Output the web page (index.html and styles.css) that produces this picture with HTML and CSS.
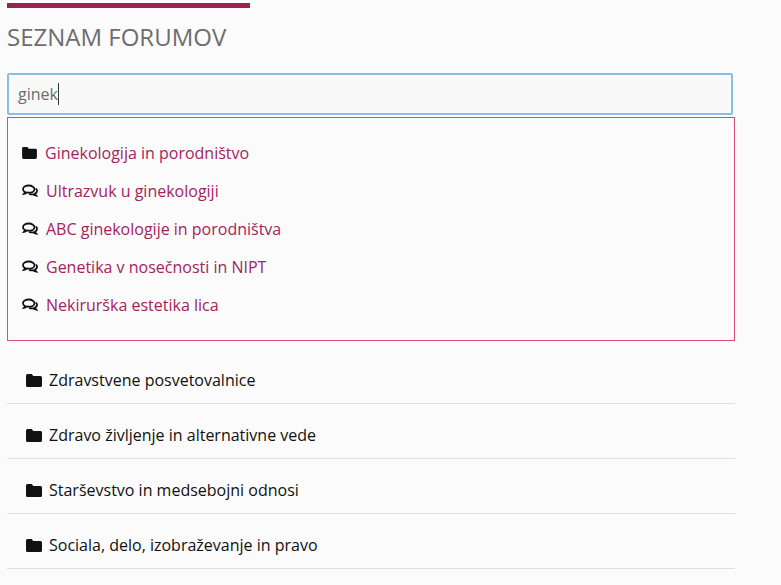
FILE: index.html
```html
<!DOCTYPE html>
<html lang="en">
<head>
    <meta charset="UTF-8">
    <meta name="viewport" content="width=device-width, initial-scale=1.0">
    <title>Seznam forumov</title>
    <link rel="stylesheet" href="styles.css">
</head>
<body>
    <svg class="sprite" width="0" height="0">
        <symbol id="folder" viewBox="0 0 16 13">
            <path d="M1.500 0h4.200l1.600 2h7.200a1.500 1.500 0 0 1 1.500 1.500v8a1.500 1.500 0 0 1-1.500 1.500h-13a1.500 1.500 0 0 1-1.500-1.500v-10a1.500 1.500 0 0 1 1.500-1.500z"/>
        </symbol>
        <symbol id="comments" viewBox="0 0 16 14">
            <path class="bubble" d="M6.800 1.500C3.600 1.500 1 3.100 1 5.200c0 1.200.8 2.200 2 2.900-.2.7-.6 1.200-1 1.700 1.100-.2 2-.7 2.800-1.300.6.1 1.300.2 2 .2 3.200 0 5.700-1.600 5.700-3.500S10 1.500 6.800 1.500z"/>
            <path class="bubble" d="M13.700 4.400c.9.600 1.400 1.400 1.400 2.400 0 1.200-.8 2.200-2 2.800.2.800.6 1.500 1.200 2.100-1.300-.2-2.400-.8-3.200-1.400-1.400.2-2.800 0-4-.5"/>
        </symbol>
    </svg>

    <div class="page">
        <div class="top-bar"></div>
        <h1 class="title">SEZNAM FORUMOV</h1>

        <div class="search-box">ginek<span class="caret"></span></div>

        <ul class="results">
            <li><svg class="icon-folder"><use href="#folder"/></svg><a href="#">Ginekologija in porodništvo</a></li>
            <li><svg class="icon-comments"><use href="#comments"/></svg><a href="#">Ultrazvuk u ginekologiji</a></li>
            <li><svg class="icon-comments"><use href="#comments"/></svg><a href="#">ABC ginekologije in porodništva</a></li>
            <li><svg class="icon-comments"><use href="#comments"/></svg><a href="#">Genetika v nosečnosti in NIPT</a></li>
            <li><svg class="icon-comments"><use href="#comments"/></svg><a href="#">Nekirurška estetika lica</a></li>
        </ul>

        <ul class="forums">
            <li><svg class="icon-folder"><use href="#folder"/></svg>Zdravstvene posvetovalnice</li>
            <li><svg class="icon-folder"><use href="#folder"/></svg>Zdravo življenje in alternativne vede</li>
            <li><svg class="icon-folder"><use href="#folder"/></svg>Starševstvo in medsebojni odnosi</li>
            <li><svg class="icon-folder"><use href="#folder"/></svg>Sociala, delo, izobraževanje in pravo</li>
        </ul>
    </div>
</body>
</html>
```

FILE: styles.css
```css
body {
    margin: 0;
    background-color: #fbfbfb;
    font-family: "Open Sans", sans-serif;
    font-size: 16px;
    color: #111;
}
ul {
    list-style: none;
    margin: 0;
    padding: 0;
}
.sprite {
    display: block;
}
.page {
    width: 728px;
    margin-left: 7px;
    padding-top: 3px;
}
.top-bar {
    width: 243px;
    height: 5px;
    background-color: #9c2251;
}
.title {
    margin: 12px 0 19px;
    font-size: 24px;
    line-height: 34px;
    font-weight: 400;
    color: #6d6d6d;
}
.search-box {
    display: flex;
    align-items: center;
    box-sizing: border-box;
    width: 726px;
    height: 42px;
    padding-left: 9px;
    border: 2px solid #8cbcea;
    border-radius: 2px;
    background-color: #f9f9f9;
    color: #6d6d6d;
}
.caret {
    width: 1px;
    height: 22px;
    background-color: #333;
}
.results {
    box-sizing: border-box;
    height: 224px;
    margin-top: 2px;
    padding: 16px 14px;
    border: 1px solid #d94a80;
}
.results li {
    display: flex;
    align-items: center;
    height: 38px;
}
.results a {
    color: #a3245c;
    text-decoration: none;
}
.icon-folder {
    flex: none;
    width: 15px;
    height: 12px;
    margin-right: 8px;
    fill: #111;
}
.icon-comments {
    flex: none;
    width: 16px;
    height: 14px;
    margin-right: 8px;
}
.bubble {
    fill: none;
    stroke: #111;
    stroke-width: 1.800;
}
.forums li {
    display: flex;
    align-items: center;
    box-sizing: border-box;
    height: 55px;
    padding: 8px 0 0 19px;
    border-bottom: 1px solid #e0e0e0;
}
.forums li:first-child {
    margin-top: 8px;
}
.forums .icon-folder {
    width: 16px;
    height: 13px;
    margin-right: 7px;
}
```
